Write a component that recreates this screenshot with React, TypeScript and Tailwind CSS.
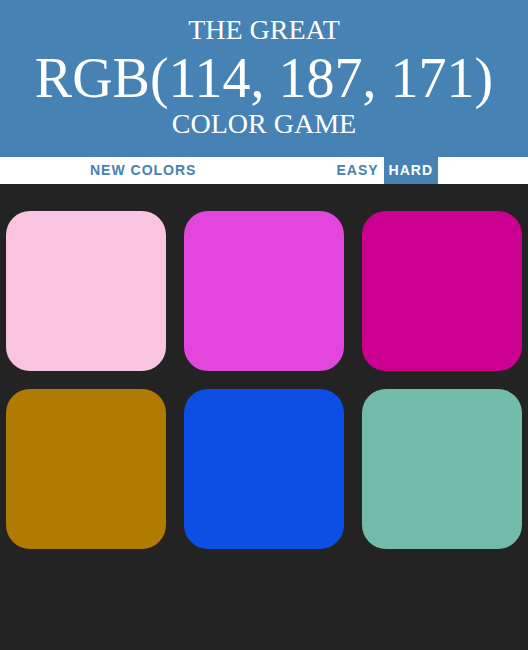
const colors = [
  "bg-[#f9c4e2]",
  "bg-[#e346dc]",
  "bg-[#cc0090]",
  "bg-[#b17a00]",
  "bg-[#0b4fe4]",
  "bg-[#72bbab]",
];

export default function App() {
  return (
    <div className="min-h-[650px] bg-[#232323]">
      {/* Header */}
      <div className="bg-[#4682b4] pt-[14px] pb-[21px] text-center text-white uppercase font-['Liberation_Serif',serif]">
        <div className="text-[28px] leading-[31px]">The Great</div>
        <div className="text-[56px] leading-[67px]">RGB(114, 187, 171)</div>
        <div className="text-[28px] leading-[24px]">Color Game</div>
      </div>

      {/* Stripe */}
      <div className="flex h-[27px] justify-center bg-white pr-[5px] font-['Liberation_Sans',sans-serif] text-[14px] font-bold">
        <button className="h-full px-[5px] uppercase tracking-[1px] text-[#4682b4]">New Colors</button>
        <span className="w-[130px]" />
        <button className="h-full px-[5px] uppercase tracking-[1px] text-[#4682b4]">Easy</button>
        <button className="h-full bg-[#4682b4] px-[5px] uppercase tracking-[1px] text-white">Hard</button>
      </div>

      {/* Squares */}
      <div className="grid grid-cols-3 gap-x-[18px] gap-y-[18px] px-[6px] pt-[27px]">
        {colors.map((c, i) => (
          <div key={i} className={`h-[160px] rounded-[24px] ${c}`} />
        ))}
      </div>
    </div>
  );
}
